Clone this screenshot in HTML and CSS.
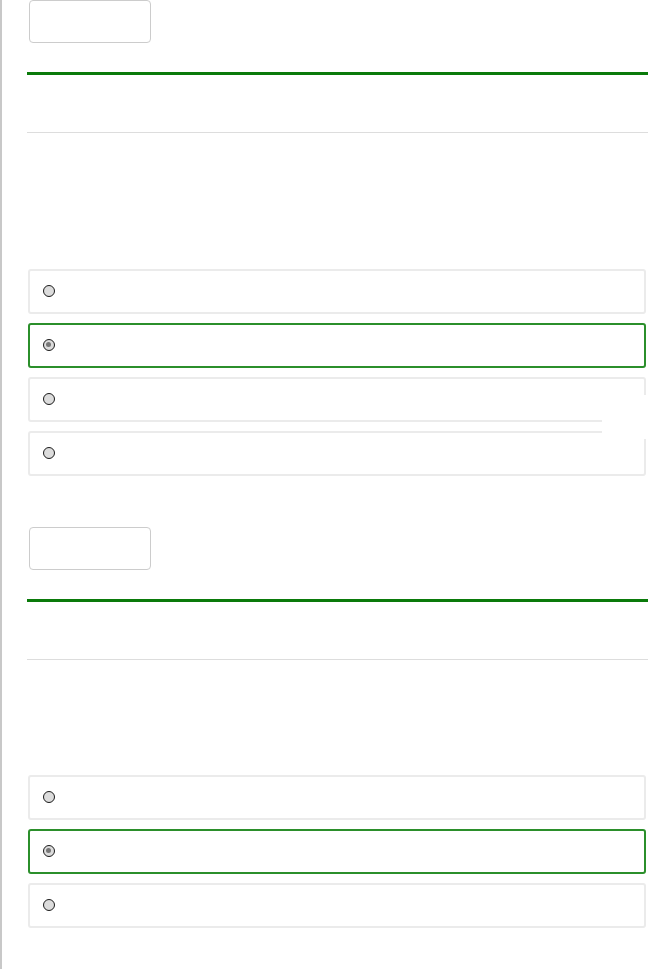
FILE: index.html
```html
<!DOCTYPE html>
<html lang="pt-BR">
<head>
  <meta charset="UTF-8">
  <title>Questionário</title>
  <link rel="stylesheet" href="styles.css">
</head>
<body>

<div class="pagina">

  <div class="questao">
    <div class="caixa-botao"></div>
    <div class="cabecalho"></div>
    <div class="opcoes opcoes-primeira">
      <label class="opcao"><span class="radio"></span></label>
      <label class="opcao selecionada"><span class="radio marcado"></span></label>
      <label class="opcao"><span class="radio"></span></label>
      <label class="opcao"><span class="radio"></span></label>
      <div class="falha"></div>
    </div>
  </div>

  <div class="questao">
    <div class="caixa-botao"></div>
    <div class="cabecalho"></div>
    <div class="opcoes opcoes-segunda">
      <label class="opcao"><span class="radio"></span></label>
      <label class="opcao selecionada"><span class="radio marcado"></span></label>
      <label class="opcao"><span class="radio"></span></label>
    </div>
  </div>

</div>

</body>
</html>
```

FILE: styles.css
```css
body {
  margin: 0;
  background-color: white;
  font-family: "Liberation Sans", Arial, sans-serif;
}
.pagina {
  border-left: 2px solid #c8c8c8;
  min-height: 969px;
  box-sizing: border-box;
  padding: 0 10px 0 26px;
}
.questao {
  margin-bottom: 51px;
}
.caixa-botao {
  margin-left: 1px;
  width: 122px;
  height: 43px;
  box-sizing: border-box;
  border: 1px solid #cccccc;
  border-radius: 4px;
}
.cabecalho {
  margin-top: 29px;
  margin-left: -1px;
  margin-right: -1px;
  border-top: 3px solid #0a7a0a;
  height: 57px;
  border-bottom: 1px solid #dddddd;
}
.opcoes {
  position: relative;
  display: flex;
  flex-direction: column;
  gap: 9px;
  margin-right: 1px;
}
.opcoes-primeira {
  margin-top: 136px;
}
.opcoes-segunda {
  margin-top: 115px;
}
.opcao {
  display: flex;
  align-items: center;
  height: 45px;
  box-sizing: border-box;
  border: 2px solid #ebebeb;
  border-radius: 3px;
  padding: 0 0 2px 13px;
}
.opcao.selecionada {
  border-color: #2b8f2b;
}
.radio {
  width: 12px;
  height: 12px;
  box-sizing: border-box;
  border: 1.5px solid #1a1a1a;
  border-radius: 50%;
  background-color: #dcdcdc;
  position: relative;
}
.radio.marcado::after {
  content: "";
  position: absolute;
  left: 2px;
  top: 2px;
  width: 5px;
  height: 5px;
  border-radius: 50%;
  background-color: #777;
}
/* pedaço em branco sobre a borda da terceira opção */
.falha {
  position: absolute;
  left: 574px;
  top: 126px;
  width: 50px;
  height: 44px;
  background-color: white;
}
```
